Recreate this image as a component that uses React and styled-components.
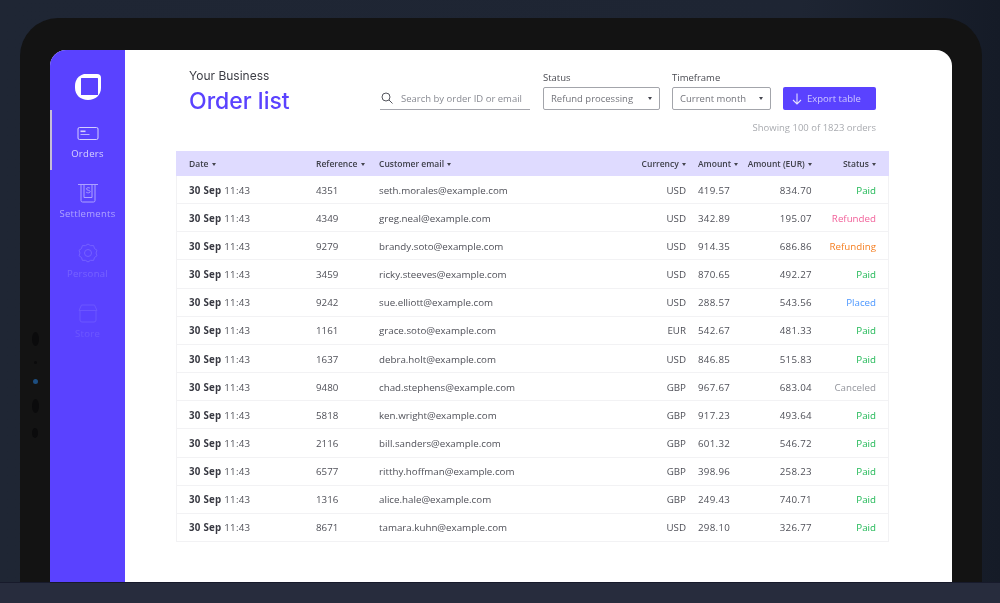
import React from "react";
import styled, { createGlobalStyle } from "styled-components";

const orders = [
  ["4351", "seth.morales@example.com", "USD", "419.57", "834.70", "Paid"],
  ["4349", "greg.neal@example.com", "USD", "342.89", "195.07", "Refunded"],
  ["9279", "brandy.soto@example.com", "USD", "914.35", "686.86", "Refunding"],
  ["3459", "ricky.steeves@example.com", "USD", "870.65", "492.27", "Paid"],
  ["9242", "sue.elliott@example.com", "USD", "288.57", "543.56", "Placed"],
  ["1161", "grace.soto@example.com", "EUR", "542.67", "481.33", "Paid"],
  ["1637", "debra.holt@example.com", "USD", "846.85", "515.83", "Paid"],
  ["9480", "chad.stephens@example.com", "GBP", "967.67", "683.04", "Canceled"],
  ["5818", "ken.wright@example.com", "GBP", "917.23", "493.64", "Paid"],
  ["2116", "bill.sanders@example.com", "GBP", "601.32", "546.72", "Paid"],
  ["6577", "ritthy.hoffman@example.com", "GBP", "398.96", "258.23", "Paid"],
  ["1316", "alice.hale@example.com", "GBP", "249.43", "740.71", "Paid"],
  ["8671", "tamara.kuhn@example.com", "USD", "298.10", "326.77", "Paid"],
];

const statusColors = {
  Paid: "#1fb855",
  Refunded: "#f2619a",
  Refunding: "#f57f22",
  Placed: "#4a96ff",
  Canceled: "#94969d",
};

const GlobalStyle = createGlobalStyle`
  html, body {
    margin: 0;
    padding: 0;
    background: #1e2533;
  }
  * {
    box-sizing: border-box;
  }
`;

const Page = styled.div`
  width: 1000px;
  height: 603px;
  overflow: hidden;
  display: flex;
  flex-direction: column;
  background: #1e2533;
  font-family: "Open Sans", "Liberation Sans", sans-serif;
  filter: blur(0.5px);
`;

const Stage = styled.div`
  height: 582px;
  padding: 18px 18px 0 20px;
  display: flex;
  background: linear-gradient(90deg, #1f2634 0%, #1e2533 80%, #151b27 100%);
`;

const Floor = styled.div`
  height: 21px;
  background: #272c3d;
  border-top: 1px solid #171a2b;
`;

const Tablet = styled.div`
  position: relative;
  flex: 1;
  padding: 32px 30px 0;
  display: flex;
  background: #131313;
  border-radius: 38px 38px 0 0;
`;

const Sensors = styled.div`
  position: absolute;
  left: 11px;
  top: 314px;
  width: 8px;
  display: flex;
  flex-direction: column;
  align-items: center;
  gap: 15px;
`;

const Sensor = styled.span`
  width: ${(p) => p.$size}px;
  height: ${(p) => p.$long || p.$size}px;
  border-radius: 50%;
  background: ${(p) => p.$color};
`;

const Screen = styled.div`
  flex: 1;
  display: flex;
  overflow: hidden;
  background: #fff;
  border-radius: 16px 16px 0 0;
`;

const Sidebar = styled.nav`
  width: 75px;
  padding-top: 23px;
  display: flex;
  flex-direction: column;
  align-items: stretch;
  background: #5a42ff;
`;

const LogoWrap = styled.div`
  height: 37px;
  display: flex;
  justify-content: center;
`;

const NavItem = styled.a`
  height: 60px;
  padding: 12px 2px 0 0;
  display: flex;
  flex-direction: column;
  align-items: center;
  gap: 3px;
  color: #fff;
  font-size: 9.5px;
  line-height: 13px;
  letter-spacing: 0.3px;
  opacity: ${(p) => p.$fade};
  border-left: 2px solid ${(p) => (p.$active ? "#e9e6c9" : "transparent")};
`;

const IconBox = styled.span`
  height: 22px;
  display: flex;
  align-items: center;
  justify-content: center;
`;

const Main = styled.main`
  flex: 1;
  min-width: 0;
  padding: 19px 63px 0 51px;
  display: flex;
  flex-direction: column;
`;

const Header = styled.header`
  height: 82px;
  padding: 0 13px;
  display: flex;
  justify-content: space-between;
`;

const TitleBlock = styled.div`
  display: flex;
  flex-direction: column;
`;

const Business = styled.div`
  font-family: "Inter", sans-serif;
  font-size: 12px;
  line-height: 14px;
  color: #3c3d45;
`;

const Title = styled.h1`
  margin: 3px 0 0;
  font-family: "Inter", sans-serif;
  font-size: 23px;
  line-height: 30px;
  font-weight: 500;
  color: #5a42ff;
`;

const Side = styled.div`
  padding-top: 3px;
  display: flex;
  flex-direction: column;
  align-items: flex-end;
`;

const Controls = styled.div`
  display: flex;
  align-items: flex-end;
`;

const Search = styled.div`
  width: 150px;
  height: 23px;
  margin-right: 13px;
  padding-left: 1px;
  display: flex;
  align-items: center;
  gap: 8px;
  border-bottom: 1px solid #a5a6ad;
  font-size: 9.5px;
  color: #888a92;
  white-space: nowrap;
`;

const Field = styled.div`
  margin-right: ${(p) => p.$gap}px;
  display: flex;
  flex-direction: column;
  gap: 4px;
`;

const FieldLabel = styled.label`
  font-size: 9.5px;
  line-height: 11px;
  color: #4a4b52;
`;

const Select = styled.div`
  width: ${(p) => p.$width}px;
  height: 23px;
  padding: 0 7px;
  display: flex;
  align-items: center;
  justify-content: space-between;
  border: 1px solid #a3a5ab;
  border-radius: 2px;
  font-size: 9.5px;
  color: #74757c;
  white-space: nowrap;
`;

const Caret = styled.span`
  display: inline-block;
  width: 0;
  height: 0;
  margin-left: 1px;
  vertical-align: middle;
  border-left: 2.5px solid transparent;
  border-right: 2.5px solid transparent;
  border-top: 3px solid #44454f;
`;

const ExportButton = styled.button`
  width: 93px;
  height: 23px;
  padding: 0 0 0 9px;
  display: flex;
  align-items: center;
  gap: 5px;
  border: 0;
  border-radius: 2px;
  background: #5a42ff;
  color: #cfc8ff;
  font-family: inherit;
  font-size: 9.5px;
  white-space: nowrap;
`;

const Showing = styled.div`
  margin-top: 11px;
  font-size: 9.5px;
  line-height: 13px;
  color: #a9abb0;
`;

const Table = styled.table`
  width: 713px;
  table-layout: fixed;
  border-collapse: separate;
  border-spacing: 0;
  font-size: 9.75px;
`;

const HeadRow = styled.tr`
  height: 25px;
  background: #dfdbff;
`;

const Th = styled.th`
  padding: 0;
  padding-left: ${(p) => p.$left || 0}px;
  padding-right: ${(p) => p.$right || 0}px;
  text-align: ${(p) => p.$align || "left"};
  font-size: 8.5px;
  font-weight: 600;
  color: #3f404a;
  white-space: nowrap;
`;

const Row = styled.tr`
  height: 28.17px;
`;

const Td = styled.td`
  padding: 1px 0 0;
  padding-left: ${(p) => p.$left || 0}px;
  padding-right: ${(p) => p.$right || 0}px;
  text-align: ${(p) => p.$align || "left"};
  letter-spacing: ${(p) => p.$spacing || 0}px;
  color: ${(p) => p.$color || "#4f5058"};
  white-space: nowrap;
  border-bottom: 1px solid #f2f2f4;

  &:first-child {
    border-left: 1px solid #f2f2f4;
  }

  &:last-child {
    border-right: 1px solid #f2f2f4;
  }
`;

const Strong = styled.b`
  font-weight: 700;
  color: #383942;
`;

const Logo = () => (
  <svg width="28" height="28" viewBox="0 0 28 28">
    <path
      d="M10 1h13a4 4 0 0 1 4 4v10c0 7-5.500 12-13 12S1 22 1 15v-2C1 7 4.500 2.500 10 1z"
      fill="#fff"
    />
    <rect x="7" y="5" width="17" height="17" rx="0.5" fill="#5a42ff" />
  </svg>
);

const OrdersIcon = () => (
  <svg width="22" height="13" viewBox="0 0 22 13" fill="none" stroke="#fff" strokeWidth="1">
    <rect x="1" y="0.5" width="20" height="12" rx="1.500" />
    <rect x="3.500" y="3.500" width="5" height="1.600" fill="#fff" stroke="none" />
    <path d="M3.500 7.500h9" strokeWidth="0.8" />
  </svg>
);

const SettlementsIcon = () => (
  <svg width="22" height="20" viewBox="0 0 22 20" fill="none" stroke="#fff" strokeWidth="1">
    <path d="M1 1.500h20M4 1.500v16a1.500 1.500 0 0 0 1.500 1.500h11a1.500 1.500 0 0 0 1.500-1.500v-16M7 1.500v13h8v-13" />
    <path d="M13 5.200c-.8-.8-3.600-.8-3.600.7 0 1.700 3.800 1 3.800 2.700 0 1.500-3 1.500-4 .6" strokeWidth="0.9" />
  </svg>
);

const PersonalIcon = () => (
  <svg width="20" height="20" viewBox="0 0 20 20" fill="none" stroke="#fff" strokeWidth="1">
    <path d="M10 1l2.600 1.700 3-.1.900 2.900 2.500 1.800-1 2.700 1 2.700-2.500 1.800-.9 2.900-3-.1L10 19l-2.600-1.700-3 .1-.9-2.900L1 12.700 2 10 1 7.300l2.500-1.800.9-2.900 3 .1z" />
    <circle cx="10" cy="10" r="3.500" />
  </svg>
);

const StoreIcon = () => (
  <svg width="20" height="19" viewBox="0 0 20 19" fill="none" stroke="#fff" strokeWidth="1">
    <path d="M3.500 1h13L19 6.500H1z" />
    <path d="M2 6.500V16a2 2 0 0 0 2 2h12a2 2 0 0 0 2-2V6.500" />
  </svg>
);

const SearchIcon = () => (
  <svg width="12" height="12" viewBox="0 0 12 12" fill="none" stroke="#55565e" strokeWidth="1">
    <circle cx="5" cy="5" r="4" />
    <path d="M8 8l3.500 3.500" />
  </svg>
);

const ArrowDown = () => (
  <svg width="10" height="12" viewBox="0 0 10 12" fill="none" stroke="#e4e0ff" strokeWidth="1.100">
    <path d="M5 .5v10.500M1 7l4 4 4-4" />
  </svg>
);

const navItems = [
  { label: "Orders", icon: <OrdersIcon />, fade: 0.75, active: true },
  { label: "Settlements", icon: <SettlementsIcon />, fade: 0.5 },
  { label: "Personal", icon: <PersonalIcon />, fade: 0.16 },
  { label: "Store", icon: <StoreIcon />, fade: 0.1 },
];

export default function App() {
  return (
    <Page>
      <GlobalStyle />
      <Stage>
        <Tablet>
          <Sensors>
            <Sensor $size={7} $long={14} $color="#0b0b0c" />
            <Sensor $size={3} $color="#0b0b0c" />
            <Sensor $size={5} $color="#1d4e80" />
            <Sensor $size={7} $long={14} $color="#0b0b0c" />
            <Sensor $size={6} $long={10} $color="#0b0b0c" />
          </Sensors>
          <Screen>
            <Sidebar>
              <LogoWrap>
                <Logo />
              </LogoWrap>
              {navItems.map((item) => (
                <NavItem key={item.label} $fade={item.fade} $active={item.active}>
                  <IconBox>{item.icon}</IconBox>
                  <span>{item.label}</span>
                </NavItem>
              ))}
            </Sidebar>
            <Main>
              <Header>
                <TitleBlock>
                  <Business>Your Business</Business>
                  <Title>Order list</Title>
                </TitleBlock>
                <Side>
                  <Controls>
                    <Search>
                      <SearchIcon />
                      Search by order ID or email
                    </Search>
                    <Field $gap={12}>
                      <FieldLabel>Status</FieldLabel>
                      <Select $width={117}>
                        Refund processing <Caret />
                      </Select>
                    </Field>
                    <Field $gap={12}>
                      <FieldLabel>Timeframe</FieldLabel>
                      <Select $width={99}>
                        Current month <Caret />
                      </Select>
                    </Field>
                    <ExportButton>
                      <ArrowDown />
                      Export table
                    </ExportButton>
                  </Controls>
                  <Showing>Showing 100 of 1823 orders</Showing>
                </Side>
              </Header>
              <Table>
                <colgroup>
                  <col width="140" />
                  <col width="63" />
                  <col width="240" />
                  <col width="67" />
                  <col width="59" />
                  <col width="67" />
                  <col width="77" />
                </colgroup>
                <thead>
                  <HeadRow>
                    <Th $left={13}>Date <Caret /></Th>
                    <Th>Reference <Caret /></Th>
                    <Th>Customer email <Caret /></Th>
                    <Th $align="right">Currency <Caret /></Th>
                    <Th $left={12}>Amount <Caret /></Th>
                    <Th $align="right">Amount (EUR) <Caret /></Th>
                    <Th $align="right" $right={13}>Status <Caret /></Th>
                  </HeadRow>
                </thead>
                <tbody>
                  {orders.map((order) => (
                    <Row key={order[0]}>
                      <Td $left={12} $spacing={0.25}>
                        <Strong>30 Sep</Strong> 11:43
                      </Td>
                      <Td>{order[0]}</Td>
                      <Td>{order[1]}</Td>
                      <Td $align="right">{order[2]}</Td>
                      <Td $left={12} $spacing={0.3}>{order[3]}</Td>
                      <Td $align="right" $spacing={0.3}>{order[4]}</Td>
                      <Td $align="right" $right={12} $color={statusColors[order[5]]}>
                        {order[5]}
                      </Td>
                    </Row>
                  ))}
                </tbody>
              </Table>
            </Main>
          </Screen>
        </Tablet>
      </Stage>
      <Floor />
    </Page>
  );
}
